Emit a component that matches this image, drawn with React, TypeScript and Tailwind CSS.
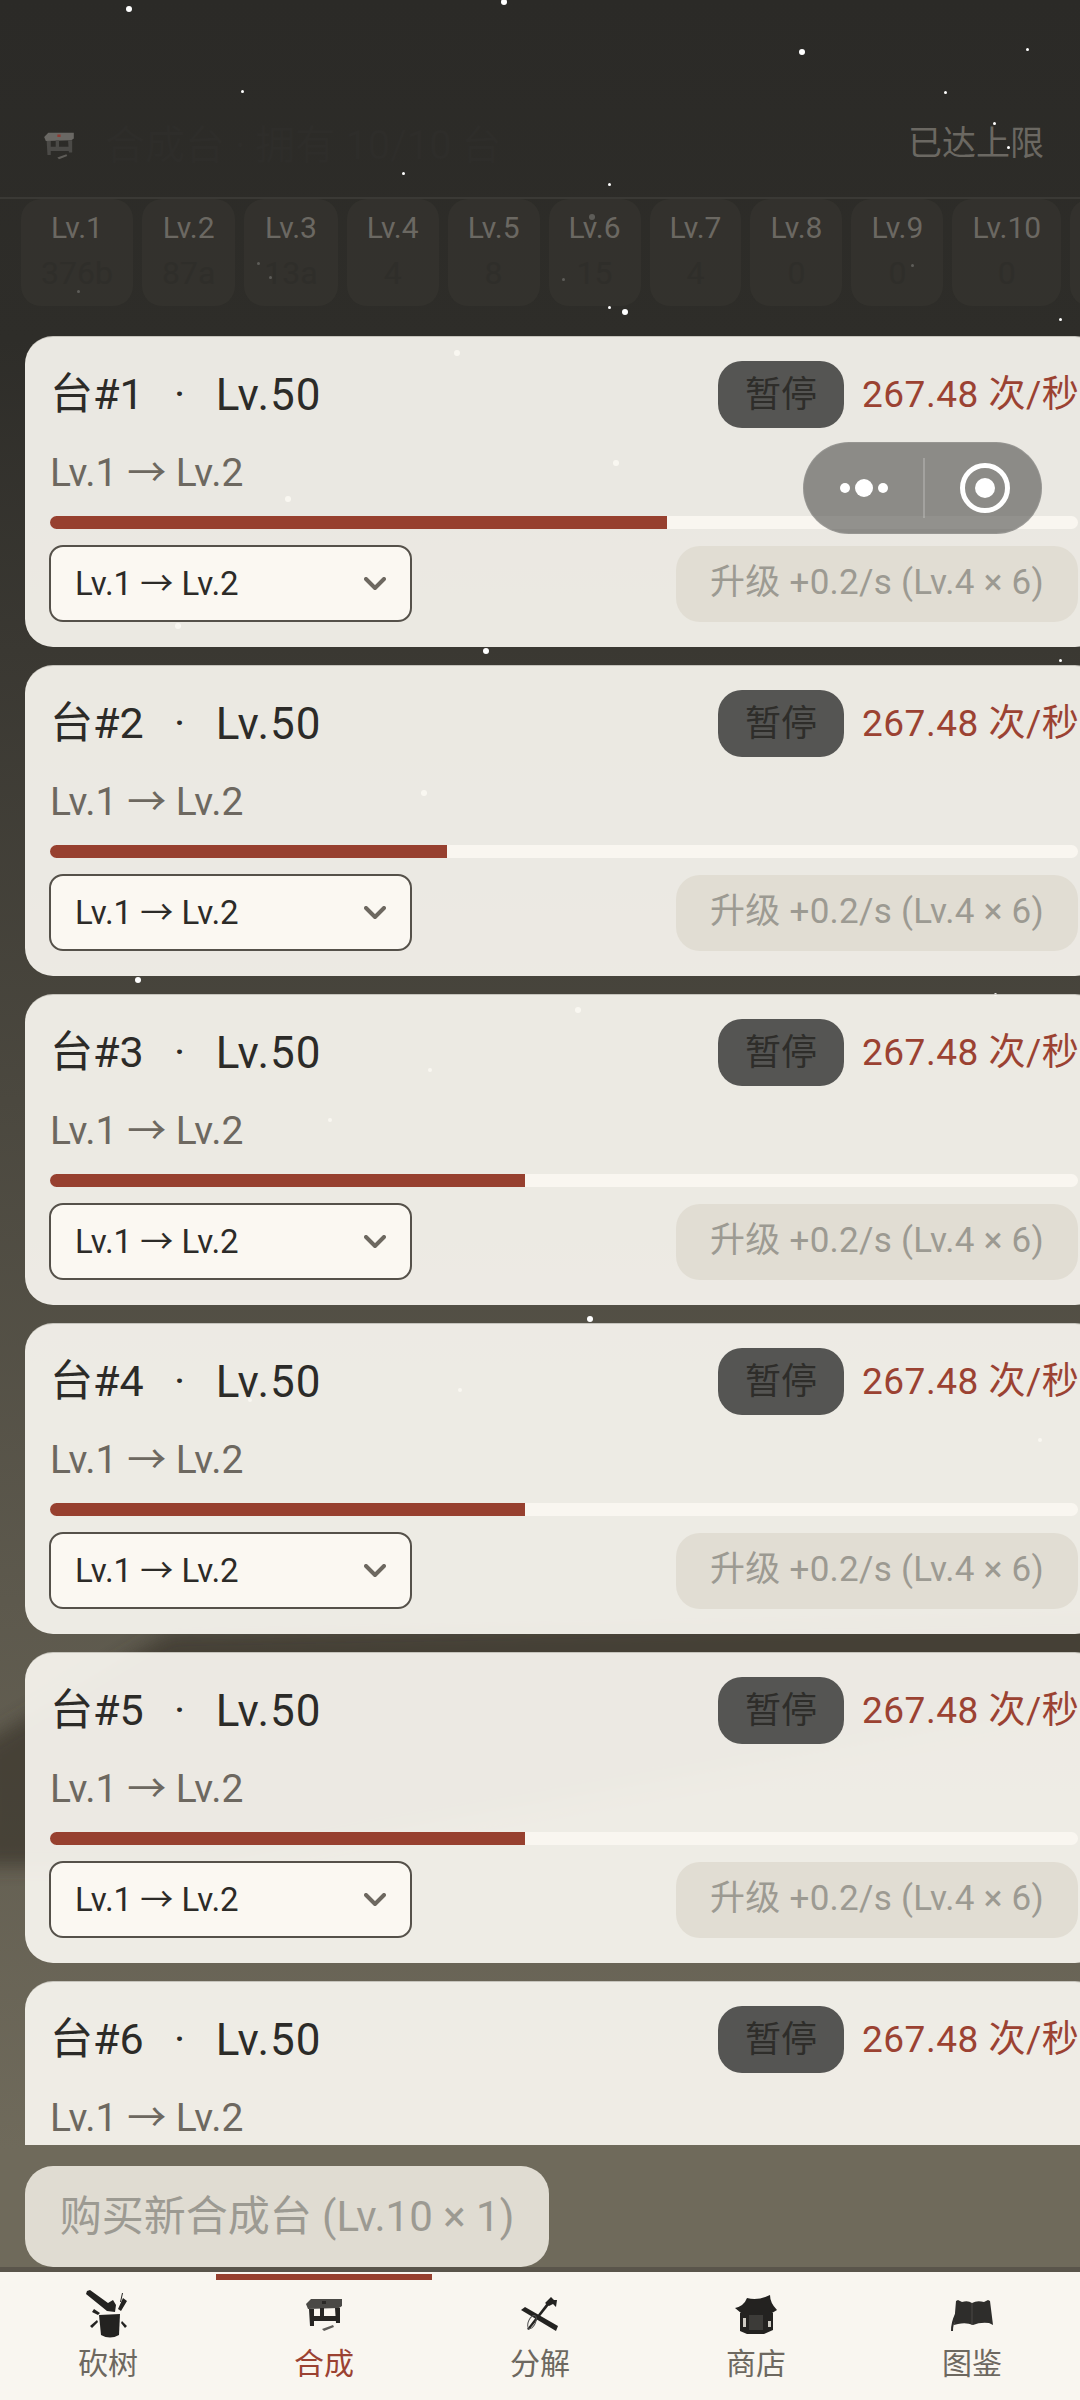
import React from "react";

const FONT = "font-['Roboto','Noto_Sans_CJK_SC',sans-serif]";

const snow: [number, number, number][] = [
  [129, 9, 3], [504, 2, 3], [802, 52, 3], [1027, 49, 1.5], [242, 91, 1.5], [945, 92, 1.5], [994, 123, 1.5], [1008, 147, 1.5],
  [403, 173, 1.5], [609, 184, 1.5], [592, 217, 3], [258, 263, 1.5], [270, 277, 1.5], [563, 279, 1.5], [912, 265, 1.5],
  [78, 291, 1.5], [609, 307, 1.5], [625, 312, 3], [1060, 319, 1.5], [457, 353, 3], [616, 463, 3], [288, 499, 3],
  [178, 626, 3], [486, 651, 3], [424, 793, 3], [138, 980, 3], [578, 1010, 3], [590, 1319, 3], [995, 994, 1.5],
  [1060, 660, 1.5], [430, 1070, 2], [330, 1120, 2], [700, 1230, 2], [250, 1400, 2], [1040, 1440, 2], [460, 1390, 2],
];

const levels = [
  ["Lv.1", "376b"], ["Lv.2", "87a"], ["Lv.3", "13a"], ["Lv.4", "4"], ["Lv.5", "8"],
  ["Lv.6", "15"], ["Lv.7", "4"], ["Lv.8", "0"], ["Lv.9", "0"], ["Lv.10", "0"],
];

const cards = [
  { n: 1, p: 60 }, { n: 2, p: 38.6 }, { n: 3, p: 46.2 }, { n: 4, p: 46.2 }, { n: 5, p: 46.2 }, { n: 6, p: 46.2 },
];

function AxeIcon() {
  return (
    <svg width="44" height="50" viewBox="0 0 44 50" fill="#232220" className="blur-[0.4px]">
      <path d="M1 1 L4 0 L22 13 L27 10 L30 15 L29 22 L21 21 L0 4 Z" />
      <path d="M13 25 L34 24 L33 45 Q24 50 15 45 Z" />
      <path d="M37 8 L41 11 L35 21 L32 19 Z M36 3 L37 3 L35 12 L34 12 Z M8 19 L14 23 L12 25 L6 22 Z M4 36 L11 30 L12 32 L6 38 Z M36 31 L41 36 L39 38 L35 33 Z" />
    </svg>
  );
}
function BenchIcon({ w = 38, h = 34, light }: { w?: number; h?: number; light?: boolean }) {
  const top = light ? "#6a6864" : "#4a4946";
  const leg = light ? "#4b4a47" : "#262523";
  return (
    <svg width={w} height={h} viewBox="0 0 38 34" className="blur-[0.4px]">
      <path d="M6 1 L37 1 L37 8 L34 10 L3 11 L1 6 Z" fill={top} />
      <path d="M17 3 H21 V6 H17 Z" fill={light ? "#8f3b32" : "#2a2927"} />
      <path d="M4 11 H9 V28 H5 Z M30 10 H35 V25 H31 Z M8 18 H32 V23 H8 Z M15 10 H19 V18 H15 Z" fill={leg} />
      <path d="M17 31 L28 27 L29 29 L19 33 Z" fill="#5f5d59" />
    </svg>
  );
}
function ToolsIcon() {
  return (
    <svg width="38" height="36" viewBox="0 0 38 36" fill="#232220" className="blur-[0.4px]">
      <path d="M0 13 L4 10 L37 29 L35 34 Z" />
      <path d="M6 32 L26 6 L28 8 L8 33 Z" />
      <path d="M24 6 L30 0 L33 3 L36 3 L35 10 L32 7 L28 9 Z" />
      <ellipse cx="11" cy="25" rx="3.5" ry="7" fill="none" stroke="#555" strokeWidth="1" transform="rotate(25 11 25)" />
    </svg>
  );
}
function PagodaIcon() {
  return (
    <svg width="42" height="40" viewBox="0 0 42 40" fill="#232220" className="blur-[0.4px]">
      <path d="M0 13 Q9 11 12 3 Q23 6 35 0 Q35 8 42 15 L37 18 H6 Z" />
      <path d="M5 18 H38 V35 L29 39 H12 L5 36 Z" />
      <path d="M8 23 H11 V32 H8 Z M33 26 H36 V32 H33 Z" fill="#cfccc4" />
      <path d="M14 20 H28 V35 H14 Z" fill="#3c3b38" />
    </svg>
  );
}
function BookIcon() {
  return (
    <svg width="44" height="33" viewBox="0 0 44 33" fill="#2e2d2b" className="blur-[0.4px]">
      <path d="M6 2 L8 1 L12 3 Q18 1 22 4 Q27 1 34 3 L38 1 L40 2 L43 26 L39 24 Q30 23 23 26 Q16 23 8 25 L4 26 Z" />
      <path d="M5 15 Q1 23 1 32 L3 32 Q3 25 6 21 Z" />
      <path d="M22 4 V26" stroke="#4a4946" strokeWidth="1" />
    </svg>
  );
}

function Card({ n, p }: { n: number; p: number }) {
  const partial = n === 6;
  return (
    <div className={`shrink-0 w-[1078px] h-[311px] bg-[#f9f6f0]/[0.93] border-t border-[#8d8a80]/40 pt-[24px] px-[25px] ${partial ? "rounded-t-[28px]" : "rounded-[28px]"}`}>
      <div className="flex items-center justify-between h-[67px]">
        <div className="flex items-center text-[#2c2b28] whitespace-nowrap">
          <span className="text-[43px]">台#{n}</span>
          <span className="w-[72px] text-center text-[43px]">·</span>
          <span className="text-[44px] tracking-[1px]">Lv.50</span>
        </div>
        <div className="flex items-center gap-[18px]">
          <div className="w-[126px] h-[67px] rounded-[24px] bg-[#555553] flex items-center justify-center text-[36px] text-[#2e2d2a]">暂停</div>
          <div className="w-[216px] text-[37px] tracking-[0.5px] text-[#9b4232] whitespace-nowrap">267.48 次/秒</div>
        </div>
      </div>
      <div className="mt-[20px] h-[50px] flex items-center text-[39px] text-[#6d6860] whitespace-nowrap">Lv.1 → Lv.2</div>
      {!partial && (
        <>
          <div className="mt-[18px] h-[13px] rounded-full bg-[#f9f6f0] overflow-hidden">
            <div className="h-full bg-[#97402f]" style={{ width: `${p}%` }} />
          </div>
          <div className="mt-[16px] h-[77px] flex items-center justify-between">
            <div className="ml-[-1px] w-[363px] h-[77px] rounded-[14px] border-2 border-[#55514a] bg-[#fbf8f2] pl-[24px] pr-[24px] flex items-center justify-between text-[33px] text-[#2c2b28]">
              <span>Lv.1 → Lv.2</span>
              <svg width="22" height="14" viewBox="0 0 22 14" fill="none" stroke="#6d6860" strokeWidth="4" strokeLinecap="round" strokeLinejoin="round"><path d="M2 2 L11 11 L20 2" /></svg>
            </div>
            <div className="w-[402px] h-[76px] rounded-[24px] bg-[#e1ddd3] flex items-center justify-center text-[35px] tracking-[0.25px] text-[#9c9a92] whitespace-nowrap">升级 +0.2/s (Lv.4 × 6)</div>
          </div>
        </>
      )}
    </div>
  );
}

function Tab({ label, active, children }: { label: string; active?: boolean; children: React.ReactNode }) {
  return (
    <div className="w-[216px] flex flex-col items-center">
      <div className={`mt-[2px] w-full h-[6px] ${active ? "bg-[#97402f]" : "bg-transparent"}`} />
      <div className="h-[58px] mt-[6px] flex items-center justify-center">{children}</div>
      <div className={`text-[30px] leading-[40px] ${active ? "text-[#9b4232]" : "text-[#6d6860]"}`}>{label}</div>
    </div>
  );
}

export default function App() {
  return (
    <div className={`relative w-[1080px] h-[2400px] overflow-hidden flex flex-col bg-[linear-gradient(to_bottom,#2b2a27_0px,#2e2d29_340px,#3a3832_650px,#4b483f_1100px,#5d594d_1600px,#6f6a5b_2150px)] ${FONT}`}>
      <div className="absolute inset-0">
        <svg width="1080" height="2400" viewBox="0 0 1080 2400" className="absolute inset-0">
          <defs><filter id="b"><feGaussianBlur stdDeviation="9" /></filter></defs>
          <path d="M-20 1745 L170 1632 L1100 1615 V1700 L200 1866 L-20 1866 Z" fill="#3c382f" opacity="0.75" filter="url(#b)" />
        </svg>
        {snow.map(([x, y, r], i) => (
          <div key={i} className="absolute rounded-full bg-white" style={{ left: x - r, top: y - r, width: r * 2, height: r * 2 }} />
        ))}
      </div>

      <div className="relative h-[199px] shrink-0 border-b-2 border-[#3a3935] pb-[29px] pl-[41px] pr-[36px] flex items-end justify-between">
        <div className="flex items-center gap-[28px] h-[50px] mb-[-3px]">
          <BenchIcon w={36} h={28} light />
          <span className="text-[40px] text-[#2e2d2a] whitespace-nowrap">合成台 · 拥有 10/10 台</span>
        </div>
        <span className="text-[34px] leading-[50px] text-[#6b6862]">已达上限</span>
      </div>

      <div className="relative h-[137px] shrink-0 pl-[21px] flex gap-[9px] overflow-hidden">
        {levels.map(([a, b]) => (
          <div key={a} className="shrink-0 h-[107px] rounded-[20px] bg-[#34332e]/80 px-[20px] flex flex-col items-center">
            <span className="mt-[9px] text-[30px] leading-[40px] text-[#6b6862]">{a}</span>
            <span className="mt-[3px] text-[32px] leading-[44px] text-[#2f2e2a]">{b}</span>
          </div>
        ))}
        <div className="shrink-0 w-[40px] h-[107px] rounded-[20px] bg-[#34332e]/80" />
      </div>

      <div className="relative h-[1809px] shrink-0 pl-[25px] flex flex-col gap-[18px] overflow-hidden">
        {cards.map((c) => <Card key={c.n} {...c} />)}
      </div>

      <div className="relative flex-1 pt-[21px] pl-[25px]">
        <div className="w-[524px] h-[101px] rounded-[28px] bg-[#e0dcd2] flex items-center justify-center text-[42px] text-[#9c9a92] whitespace-nowrap">购买新合成台 (Lv.10 × 1)</div>
      </div>

      <div className="relative h-[133px] shrink-0 border-t-[5px] border-[#5a554b] bg-[#f9f6f0] flex">
        <Tab label="砍树"><AxeIcon /></Tab>
        <Tab label="合成" active><BenchIcon /></Tab>
        <Tab label="分解"><ToolsIcon /></Tab>
        <Tab label="商店"><PagodaIcon /></Tab>
        <Tab label="图鉴"><BookIcon /></Tab>
      </div>

      <div className="absolute left-[803px] top-[442px] w-[239px] h-[92px] rounded-full bg-[#3e3e3c]/55 border border-white/10 flex items-center">
        <div className="w-[119px] flex items-center justify-center gap-[5px]">
          <span className="w-[10px] h-[10px] rounded-full bg-white" />
          <span className="w-[18px] h-[18px] rounded-full bg-white" />
          <span className="w-[10px] h-[10px] rounded-full bg-white" />
        </div>
        <div className="w-[2px] h-[60px] bg-white/20" />
        <div className="flex-1 flex items-center justify-center pl-[4px]">
          <div className="w-[50px] h-[50px] rounded-full border-[5px] border-white flex items-center justify-center">
            <span className="w-[20px] h-[20px] rounded-full bg-white" />
          </div>
        </div>
      </div>
    </div>
  );
}
